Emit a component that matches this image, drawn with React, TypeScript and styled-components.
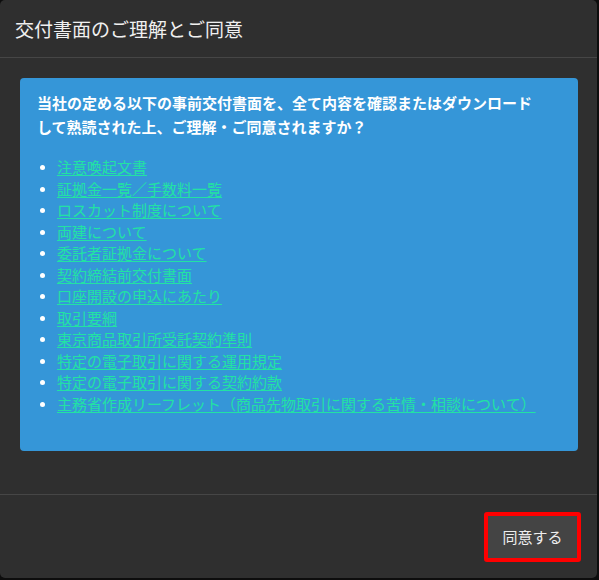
import styled, { createGlobalStyle } from "styled-components";

const GlobalStyle = createGlobalStyle`
    html, body {
        margin: 0;
        padding: 0;
        background: #0d0d0d;
    }
    body {
        font-family: "Noto Sans CJK JP", "Noto Sans", sans-serif;
    }
`;

const Modal = styled.div`
    width: 597px;
    height: 578px;
    background: #2f2f2f;
    border-radius: 5px;
    display: flex;
    flex-direction: column;
    overflow: hidden;
`;

const Header = styled.header`
    height: 57px;
    padding: 0 15px;
    display: flex;
    align-items: center;
    border-bottom: 1px solid #464646;
    h4 {
        margin: 0;
        font-size: 19px;
        font-weight: 400;
        color: #f0f0f0;
        letter-spacing: 0;
    }
`;

const Body = styled.div`
    flex: 1;
    padding: 20px 19px 42px 20px;
`;

const InfoBox = styled.div`
    background: #3596d8;
    border-radius: 4px;
    padding: 13px 20px 37px 17px;
    color: #fff;
`;

const Lead = styled.p`
    margin: 0;
    font-size: 15px;
    font-weight: 700;
    line-height: 24px;
`;

const DocList = styled.ul`
    margin: 17px 0 0;
    padding-left: 20px;
    list-style: disc;
    li {
        font-size: 15px;
        line-height: 21.5px;
    }
    li::marker {
        color: #fff;
        font-size: 13px;
    }
    a {
        color: #22e2a4;
        text-decoration: underline;
        text-underline-offset: 2px;
    }
`;

const Footer = styled.footer`
    height: 84px;
    border-top: 1px solid #464646;
    display: flex;
    align-items: center;
    justify-content: flex-end;
    padding: 0 16px;
    box-sizing: border-box;
`;

const AgreeButton = styled.button`
    width: 97px;
    height: 50px;
    box-sizing: border-box;
    background: #444;
    color: #eee;
    border: 4px solid #f00;
    border-radius: 3px;
    font-family: inherit;
    font-size: 15px;
    cursor: pointer;
`;

const docs = [
    "注意喚起文書",
    "証拠金一覧／手数料一覧",
    "ロスカット制度について",
    "両建について",
    "委託者証拠金について",
    "契約締結前交付書面",
    "口座開設の申込にあたり",
    "取引要綱",
    "東京商品取引所受託契約準則",
    "特定の電子取引に関する運用規定",
    "特定の電子取引に関する契約約款",
    "主務省作成リーフレット（商品先物取引に関する苦情・相談について）",
];

export default function App() {
    return (
        <>
            <GlobalStyle />
            <Modal>
                <Header>
                    <h4>交付書面のご理解とご同意</h4>
                </Header>
                <Body>
                    <InfoBox>
                        <Lead>
                            当社の定める以下の事前交付書面を、全て内容を確認またはダウンロード
                            <br />
                            して熟読された上、ご理解・ご同意されますか？
                        </Lead>
                        <DocList>
                            {docs.map((d) => (
                                <li key={d}>
                                    <a href="#">{d}</a>
                                </li>
                            ))}
                        </DocList>
                    </InfoBox>
                </Body>
                <Footer>
                    <AgreeButton>同意する</AgreeButton>
                </Footer>
            </Modal>
        </>
    );
}
